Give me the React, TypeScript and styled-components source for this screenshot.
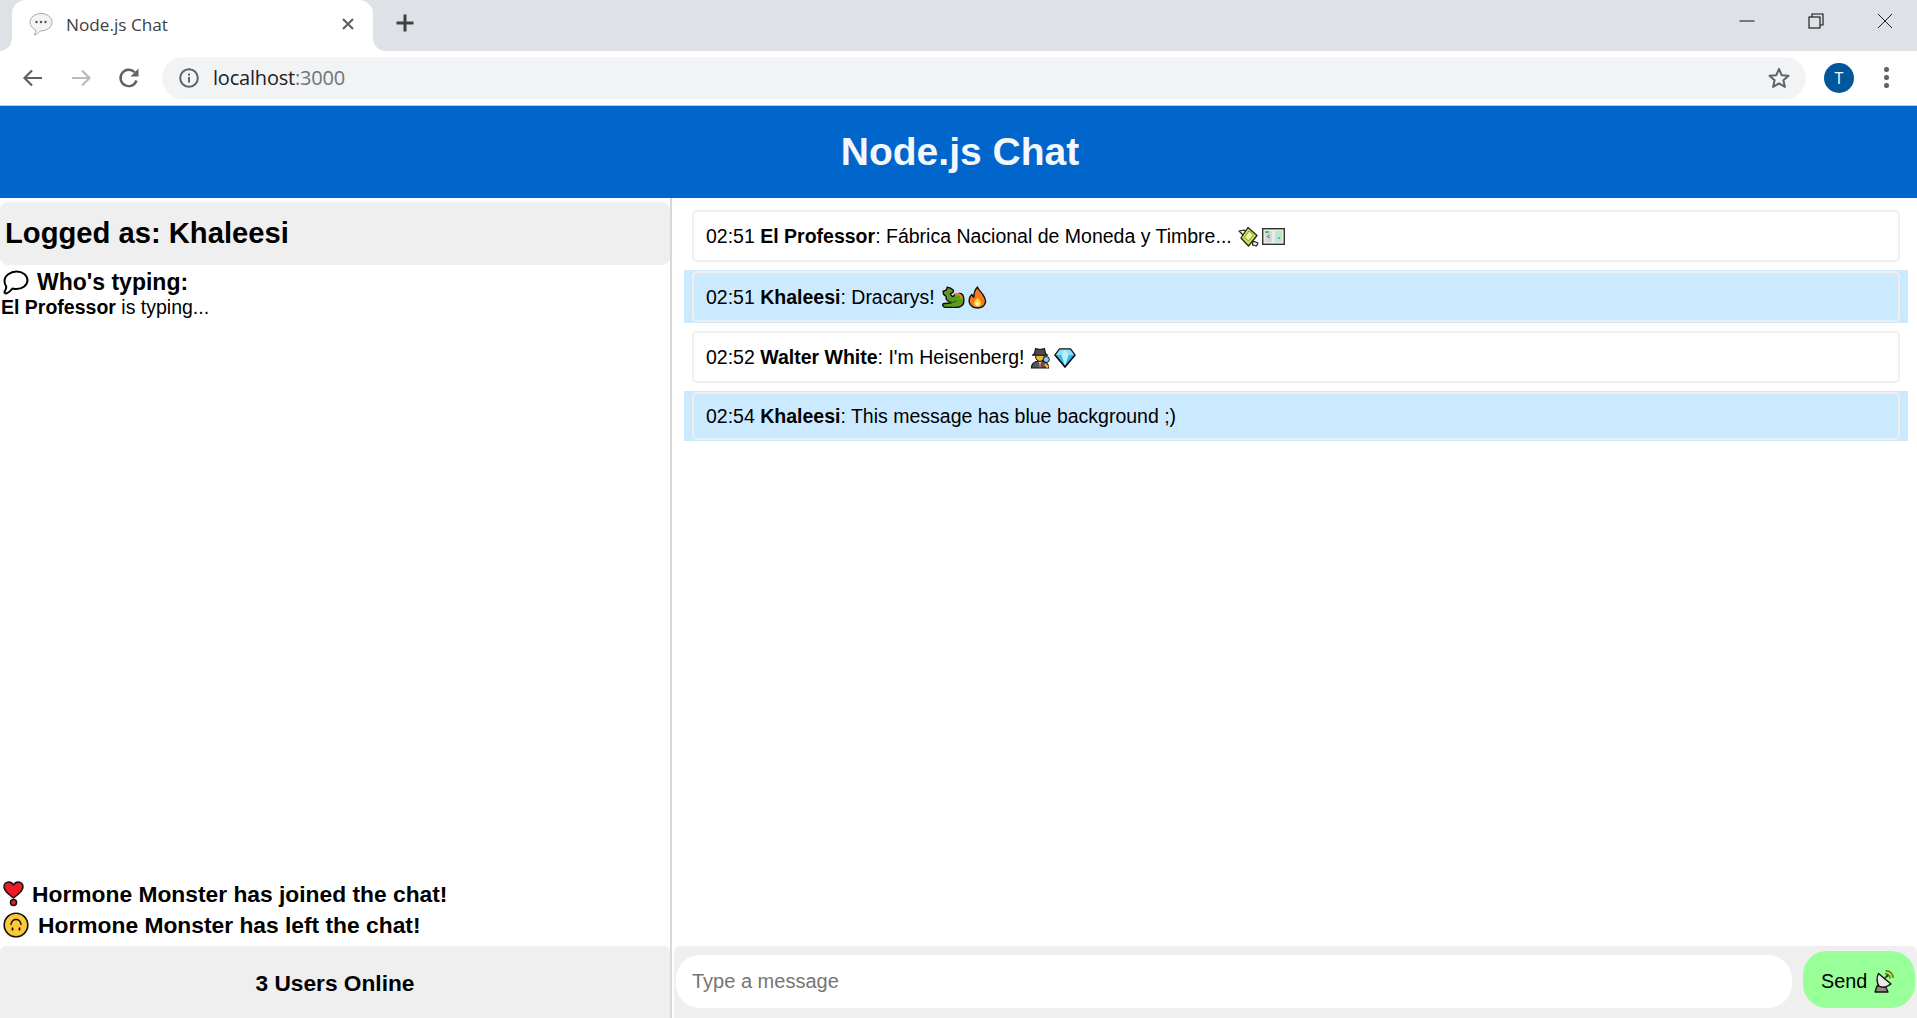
import React from "react";
import styled, { createGlobalStyle } from "styled-components";

const Global = createGlobalStyle`
  html, body { margin: 0; padding: 0; height: 100%; overflow: hidden; background: #fff; }
  #root { height: 100%; }
  * { box-sizing: border-box; }
`;

const Page = styled.div`
  display: flex;
  flex-direction: column;
  height: 1018px;
  font-family: "Liberation Sans", Arial, sans-serif;
  color: #000;
`;

/* ---------- browser chrome ---------- */
const TabStrip = styled.div`
  display: flex;
  align-items: flex-end;
  height: 51px;
  flex: none;
  background: #dee1e6;
  padding-left: 12px;
`;
const Tab = styled.div`
  position: relative;
  display: flex;
  align-items: center;
  width: 361px;
  height: 51px;
  padding: 0 18px 3px 17px;
  gap: 13px;
  background: #fff;
  border-radius: 14px 14px 0 0;
  &::before, &::after {
    content: "";
    position: absolute;
    bottom: 0;
    width: 12px;
    height: 12px;
    background: radial-gradient(circle at var(--c) 0, #dee1e6 11.5px, #fff 12px);
  }
  &::before { left: -12px; --c: 0; }
  &::after { right: -12px; --c: 100%; }
`;
const TabTitle = styled.span`
  flex: 1;
  font-family: "Open Sans", sans-serif;
  font-size: 17.200px;
  color: #3c4043;
`;
const NewTab = styled.div`
  display: flex;
  align-items: center;
  margin: 0 0 6px 22px;
  height: 45px;
`;
const WindowControls = styled.div`
  display: flex;
  margin-left: auto;
  align-self: flex-start;
  padding: 13px 24px 0 0;
  gap: 53px;
`;
const Toolbar = styled.div`
  display: flex;
  align-items: center;
  height: 55px;
  flex: none;
  padding: 0 21px 1px 21px;
  background: #fff;
  border-bottom: 1px solid #c8ccd2;
`;
const NavButtons = styled.div`
  display: flex;
  gap: 24px;
  align-items: center;
  margin-right: 21px;
`;
const AddressBar = styled.div`
  display: flex;
  align-items: center;
  width: 1644px;
  height: 42px;
  padding: 0 15px 0 17px;
  gap: 14px;
  border-radius: 21px;
  background: #f1f3f4;
`;
const Url = styled.span`
  flex: 1;
  font-family: "Open Sans", sans-serif;
  font-size: 20px;
  letter-spacing: -0.2px;
  color: #202124;
  small { font-size: inherit; color: #6f7378; }
`;
const Avatar = styled.div`
  display: flex;
  align-items: center;
  justify-content: center;
  width: 30px;
  height: 30px;
  margin-left: 18px;
  border-radius: 50%;
  background: #01579b;
  color: #fff;
  font-family: "Open Sans", sans-serif;
  font-size: 16px;
`;
const Dots = styled.div`
  margin-left: 30px;
  display: flex;
  flex-direction: column;
  gap: 3.5px;
  i { display: block; width: 4.5px; height: 4.5px; border-radius: 50%; background: #5f6368; }
`;

/* ---------- app ---------- */
const Header = styled.h1`
  margin: 0;
  flex: none;
  height: 92px;
  display: flex;
  align-items: center;
  justify-content: center;
  padding-left: 3px;
  background: #0066cc;
  color: #f4f7fb;
  font-size: 39px;
  font-weight: 700;
`;
const Columns = styled.div`
  flex: 1;
  display: flex;
  min-height: 0;
`;
const Sidebar = styled.aside`
  width: 672px;
  flex: none;
  display: flex;
  flex-direction: column;
  padding-top: 4px;
  border-right: 2px solid #d8d8d8;
`;
const LoggedAs = styled.div`
  display: flex;
  align-items: center;
  height: 63px;
  padding: 0 0 1px 5px;
  background: #efefef;
  border-radius: 8px;
  font-size: 29.200px;
  font-weight: 700;
`;
const TypingTitle = styled.div`
  display: flex;
  align-items: center;
  gap: 8px;
  margin-top: 5px;
  padding-left: 3px;
  height: 25px;
  font-size: 23px;
  font-weight: 700;
`;
const TypingLine = styled.div`
  padding-left: 1px;
  margin-top: 1px;
  font-size: 19.500px;
  line-height: 23px;
  b { font-weight: 700; }
`;
const Notices = styled.div`
  margin-top: auto;
  display: flex;
  flex-direction: column;
  gap: 5px;
  padding: 0 0 8px 3px;
`;
const Notice = styled.div<{ $gap: number }>`
  display: flex;
  align-items: center;
  gap: ${(p) => p.$gap}px;
  height: 26px;
  font-size: 22.800px;
  font-weight: 700;
`;
const OnlineBar = styled.div`
  display: flex;
  align-items: center;
  justify-content: center;
  height: 72px;
  flex: none;
  padding-top: 2px;
  background: #efefef;
  border-radius: 6px 6px 0 0;
  font-size: 22.700px;
  font-weight: 700;
`;
const ChatPane = styled.main`
  flex: 1;
  min-width: 0;
  display: flex;
  flex-direction: column;
`;
const MessageList = styled.div`
  flex: 1;
  display: flex;
  flex-direction: column;
  gap: 8px;
  padding: 12px 9px 0 12px;
`;
const MessageRow = styled.div<{ $own?: boolean }>`
  padding: ${(p) => (p.$own ? "1px 8px" : "0 8px")};
  background: ${(p) => (p.$own ? "#cceaff" : "transparent")};
`;
const MessageCard = styled.div<{ $height: number; $offset: number }>`
  display: flex;
  align-items: center;
  gap: 6px;
  height: ${(p) => p.$height}px;
  padding: ${(p) => p.$offset}px 0 0 12px;
  border: 2px solid #efefef;
  border-radius: 5px;
  font-size: 19.500px;
  white-space: pre;
  b { font-weight: 700; }
`;
const EmojiPair = styled.span`
  display: inline-flex;
  align-items: center;
  gap: 3px;
`;
const Composer = styled.form`
  display: flex;
  align-items: flex-start;
  height: 72px;
  flex: none;
  margin-left: 2px;
  padding: 5px 2px 0 2px;
  background: #efefef;
  border-radius: 6px 6px 0 0;
`;
const MessageInput = styled.input`
  width: 1116px;
  height: 53px;
  margin-top: 4px;
  padding: 0 16px;
  border: none;
  outline: none;
  border-radius: 24px;
  background: #fff;
  font-family: inherit;
  font-size: 20px;
  &::placeholder { color: #757575; opacity: 1; }
`;
const SendButton = styled.button`
  display: flex;
  align-items: center;
  gap: 7px;
  width: 112px;
  height: 57px;
  margin-left: 11px;
  padding: 4px 0 0 18px;
  border: none;
  border-radius: 24px;
  background: #99ff99;
  font-family: inherit;
  font-size: 19.800px;
  color: #000;
`;

/* ---------- icons ---------- */
const Line = { fill: "none", strokeLinecap: "round", strokeLinejoin: "round" } as const;

const FavBubble = () => (
  <svg width="24" height="25" viewBox="0 0 24 25">
    <path d="M12 1.500C5.800 1.500 1 5.400 1 10.200c0 3.400 2.300 6.200 5.700 7.700.1 1.800-.6 3.600-1.600 5.100 2.600-.5 4.900-2.200 6.200-4.100h.7c6.200 0 11-3.900 11-8.700S18.200 1.500 12 1.500z" fill="#f3f3f3" stroke="#a9a9a9" />
    <circle cx="7.500" cy="10" r="1.200" fill="#555" />
    <circle cx="12" cy="10" r="1.200" fill="#555" />
    <circle cx="16.500" cy="10" r="1.200" fill="#555" />
  </svg>
);
const CloseX = () => (
  <svg width="14" height="14" viewBox="0 0 14 14"><path d="M2 2l10 10M12 2L2 12" stroke="#5f6368" strokeWidth="2.200" fill="none" /></svg>
);
const Plus = () => (
  <svg width="20" height="20" viewBox="0 0 20 20"><path d="M10 1.500v17M1.500 10h17" stroke="#3c4043" strokeWidth="3" fill="none" /></svg>
);
const MinIcon = () => (
  <svg width="16" height="16" viewBox="0 0 16 16"><path d="M0.500 8h15" stroke="#111" strokeWidth="1" /></svg>
);
const RestoreIcon = () => (
  <svg width="16" height="16" viewBox="0 0 16 16" fill="none" stroke="#111" strokeWidth="1.100"><rect x="1" y="4" width="11" height="11" /><path d="M4 4V1h11v11h-3" /></svg>
);
const CloseWin = () => (
  <svg width="16" height="16" viewBox="0 0 16 16"><path d="M1 1l14 14M15 1L1 15" stroke="#222" strokeWidth="1" /></svg>
);
const Arrow = ({ color, flip }: { color: string; flip?: boolean }) => (
  <svg width="24" height="24" viewBox="0 0 24 24" style={flip ? { transform: "scaleX(-1)" } : undefined}>
    <path d="M21 12H4M11 4.500L3.500 12l7.500 7.500" stroke={color} strokeWidth="2.200" fill="none" />
  </svg>
);
const Reload = () => (
  <svg width="24" height="24" viewBox="0 0 24 24">
    <path d="M19.500 14.500A8.200 8.200 0 1 1 17.700 6.300" stroke="#5f6368" strokeWidth="2.400" fill="none" />
    <path d="M21.500 2.500v8h-8z" fill="#5f6368" />
  </svg>
);
const Info = () => (
  <svg width="20" height="20" viewBox="0 0 20 20">
    <circle cx="10" cy="10" r="8.800" stroke="#5f6368" strokeWidth="2" fill="none" />
    <rect x="9" y="9" width="2" height="5.500" fill="#5f6368" />
    <rect x="9" y="5.600" width="2" height="2" fill="#5f6368" />
  </svg>
);
const Star = () => (
  <svg width="24" height="24" viewBox="0 0 24 24">
    <path d="M12 3l2.700 6.200 6.800.6-5.100 4.500 1.500 6.600L12 17.400l-5.900 3.500 1.500-6.600-5.100-4.500 6.800-.6z" fill="none" stroke="#5f6368" strokeWidth="2" strokeLinejoin="round" />
  </svg>
);

const ThoughtBubble = () => (
  <svg width="26" height="25" viewBox="0 0 26 25">
    <path d="M13.500 1.500c6 0 11 3.800 11 8.800s-5 8.800-11 8.800c-1.400 0-2.700-.2-4-.6-1.200 1.600-2.900 3.500-5.800 4.800-1.300.5-2.800-.5-2-1.800.9-1.400 1.600-3 1.600-4.900-1.300-1.700-1.800-3.200-1.800-5.500 0-5.400 6-9.600 12-9.600z" {...Line} stroke="#000" strokeWidth="2" fill="#fff" />
  </svg>
);
const HeartBang = () => (
  <svg width="21" height="26" viewBox="0 0 21 26">
    <path d="M10.500 17C6 13.500 1 10.300 1 6 1 3 3.200 1 5.700 1c2 0 3.800 1 4.800 3 1-2 2.800-3 4.800-3C17.800 1 20 3 20 6c0 4.300-5 7.500-9.500 11z" fill="#ed1c24" stroke="#111" strokeWidth="1.500" strokeLinejoin="round" />
    <circle cx="10.500" cy="21.500" r="3" fill="#ed1c24" stroke="#111" strokeWidth="1.500" />
  </svg>
);
const UpsideDown = () => (
  <svg width="26" height="26" viewBox="0 0 26 26">
    <circle cx="13" cy="13" r="11.800" fill="#fcc83a" stroke="#111" strokeWidth="1.600" />
    <path d="M8 12.500C8.500 9 10.500 7.500 13 7.500s4.500 1.500 5 5" fill="none" stroke="#111" strokeWidth="1.400" strokeLinecap="round" />
    <ellipse cx="9.500" cy="17" rx="1" ry="1.700" fill="#111" />
    <ellipse cx="16.500" cy="17" rx="1" ry="1.700" fill="#111" />
  </svg>
);
const MoneyWings = () => (
  <svg width="21" height="22" viewBox="0 0 21 22">
    <path d="M1 5l5-1 4 3-4 3z" fill="#f1f1e8" stroke="#222" strokeWidth="1.200" strokeLinejoin="round" />
    <path d="M10 1.500l9 8-8.500 10.500L3 12z" fill="#d4e157" stroke="#222" strokeWidth="1.300" strokeLinejoin="round" />
    <path d="M11 5l4.500 4-5 6-4-3.500z" fill="#eef3a8" stroke="#8a9a2b" strokeWidth="1" />
    <path d="M15 15l5 2-1.500 3-4-1z" fill="#f1f1e8" stroke="#222" strokeWidth="1.200" strokeLinejoin="round" />
  </svg>
);
const EuroNote = () => (
  <svg width="23" height="17" viewBox="0 0 23 17">
    <rect x="0.700" y="0.700" width="21.600" height="15.600" fill="#e8ece8" stroke="#333" strokeWidth="1.400" />
    <rect x="3" y="3" width="7" height="11" fill="#d6d6d6" />
    <rect x="13" y="3" width="7" height="11" fill="#b4efbb" />
    <rect x="3" y="3" width="4" height="2" fill="#2fd05a" />
    <rect x="16" y="9" width="2" height="2" fill="#6ba6e8" />
    <path d="M8 7l-3 1.500L8 10" stroke="#777" strokeWidth="1" fill="none" />
  </svg>
);
const Dragon = () => (
  <svg width="24" height="23" viewBox="0 0 23 22">
    <path d="M5 20.500c-3 0-4-2-3-3.500 3-1 6 0 8-1-3-1-6-3-5-6L2.500 8 2 5l3-1 1-3 3 1 3 2c0 2-1 3-3 3 0 2 2 3 3 3 0-2 3-3 6-3 3 0 4 4 4 7 0 4-3 6.500-8 6.500z" fill="#5b9e1f" stroke="#101" strokeWidth="1.300" strokeLinejoin="round" />
    <path d="M13 8c3-1 6 0 7 4" stroke="#e8851c" strokeWidth="2.200" fill="none" />
    <path d="M7 15c3 1 6 1 8-1" stroke="#2e5d10" strokeWidth="1.200" fill="none" />
  </svg>
);
const Fire = () => (
  <svg width="19" height="23" viewBox="0 0 18 22">
    <path d="M9 1c1 3 3 4 5 7 2 3 3.500 5 2.500 8-.9 3-4 5-7.500 5S2.300 19 1.300 16C.500 13 1.500 10 3.500 8c.5 1.300 1 2.200 2 2.700C5.500 7 6.500 3.500 9 1z" fill="#f4791f" stroke="#111" strokeWidth="1.300" strokeLinejoin="round" />
    <path d="M9 11c1.500 2 3.500 3 3.500 5.500 0 2-1.700 3-3.500 3s-3.500-1-3.500-3C5.500 14.500 8 13.500 9 11z" fill="#fdd835" />
    <path d="M9 15c1 1 1.500 1.600 1.500 2.500S9.800 19 9 19s-1.500-.6-1.500-1.500S8 16 9 15z" fill="#fff6cf" />
  </svg>
);
const Detective = () => (
  <svg width="21" height="22" viewBox="0 0 21 22">
    <path d="M1.500 21c0-5 3-7 8.500-7s8.500 2 8.500 7z" fill="#555" stroke="#111" strokeWidth="1.200" />
    <path d="M8.500 14.500h3L10 21z" fill="#f4f4f4" />
    <path d="M9.400 15.500h1.200L10.500 20h-1z" fill="#c62828" />
    <circle cx="10" cy="10" r="4.300" fill="#f4b13e" stroke="#111" />
    <path d="M2.500 8.200h15L15.500 6.500 14.500 1.500 10 2.500 5.500 1.500 4.500 6.500z" fill="#4a4a4a" stroke="#111" strokeWidth="1.100" strokeLinejoin="round" />
    <circle cx="16.300" cy="12.500" r="3" fill="#7fd3f5" stroke="#111" />
    <path d="M15 17l3 3.500" stroke="#f4b13e" strokeWidth="2.400" />
  </svg>
);
const Gem = () => (
  <svg width="22" height="20" viewBox="0 0 22 20">
    <path d="M5.500 1h11L21 7 11 19 1 7z" fill="#35b8ea" stroke="#111" strokeWidth="1.200" strokeLinejoin="round" />
    <path d="M1 7h20L16.500 1h-11z" fill="#8fe0fb" />
    <path d="M7.500 7L11 1.500 14.500 7 11 18z" fill="#bdf0ff" />
    <path d="M5.500 1h11L21 7 11 19 1 7z" fill="none" stroke="#111" strokeWidth="1.200" strokeLinejoin="round" />
  </svg>
);
const Satellite = () => (
  <svg width="20" height="23" viewBox="0 0 20 23">
    <path d="M3 16l-2 6h13l-3-7z" fill="#8a8a8a" stroke="#111" strokeWidth="1.300" strokeLinejoin="round" />
    <path d="M6 17h3l-.5 2h-2z" fill="#d9736f" />
    <path d="M4.500 3.500C2.500 7 2.500 13 5 16c2.500 1.800 7 1.500 12-2z" fill="#e9e9e9" stroke="#111" strokeWidth="1.400" strokeLinejoin="round" />
    <path d="M10 9l3-3" stroke="#111" strokeWidth="1.300" />
    <path d="M11 3.800c2.600-.4 5 1.800 5.200 4.700M11.500 1c4-.6 7.500 2.800 7.700 7" fill="none" stroke="#6f7d00" strokeWidth="1.600" />
    <circle cx="13.200" cy="6" r="1.300" fill="#3a3a00" />
  </svg>
);

const messages = [
  { time: "02:51", user: "El Professor", text: "Fábrica Nacional de Moneda y Timbre...", own: false, height: 52, offset: 1, icons: [<MoneyWings key="a" />, <EuroNote key="b" />] },
  { time: "02:51", user: "Khaleesi", text: "Dracarys!", own: true, height: 51, offset: 2, icons: [<Dragon key="a" />, <Fire key="b" />] },
  { time: "02:52", user: "Walter White", text: "I'm Heisenberg!", own: false, height: 52, offset: 1, icons: [<Detective key="a" />, <Gem key="b" />] },
  { time: "02:54", user: "Khaleesi", text: "This message has blue background ;)", own: true, height: 48, offset: 0, icons: [] },
];

export default function App() {
  return (
    <Page>
      <Global />
      <TabStrip>
        <Tab>
          <FavBubble />
          <TabTitle>Node.js Chat</TabTitle>
          <CloseX />
        </Tab>
        <NewTab><Plus /></NewTab>
        <WindowControls>
          <MinIcon />
          <RestoreIcon />
          <CloseWin />
        </WindowControls>
      </TabStrip>
      <Toolbar>
        <NavButtons>
          <Arrow color="#5f6368" />
          <Arrow color="#b9bbbe" flip />
          <Reload />
        </NavButtons>
        <AddressBar>
          <Info />
          <Url>localhost<small>:3000</small></Url>
          <Star />
        </AddressBar>
        <Avatar>T</Avatar>
        <Dots><i /><i /><i /></Dots>
      </Toolbar>
      <Header>Node.js Chat</Header>
      <Columns>
        <Sidebar>
          <LoggedAs>Logged as: Khaleesi</LoggedAs>
          <TypingTitle><ThoughtBubble /> Who's typing:</TypingTitle>
          <TypingLine><b>El Professor</b> is typing...</TypingLine>
          <Notices>
            <Notice $gap={8}><HeartBang /> Hormone Monster has joined the chat!</Notice>
            <Notice $gap={9}><UpsideDown /> Hormone Monster has left the chat!</Notice>
          </Notices>
          <OnlineBar>3 Users Online</OnlineBar>
        </Sidebar>
        <ChatPane>
          <MessageList>
            {messages.map((m, i) => (
              <MessageRow key={i} $own={m.own}>
                <MessageCard $height={m.height} $offset={m.offset}>
                  <span>{m.time} <b>{m.user}</b>: {m.text}</span>
                  {m.icons.length > 0 && <EmojiPair>{m.icons}</EmojiPair>}
                </MessageCard>
              </MessageRow>
            ))}
          </MessageList>
          <Composer onSubmit={(e) => e.preventDefault()}>
            <MessageInput placeholder="Type a message" />
            <SendButton type="button">Send <Satellite /></SendButton>
          </Composer>
        </ChatPane>
      </Columns>
    </Page>
  );
}
